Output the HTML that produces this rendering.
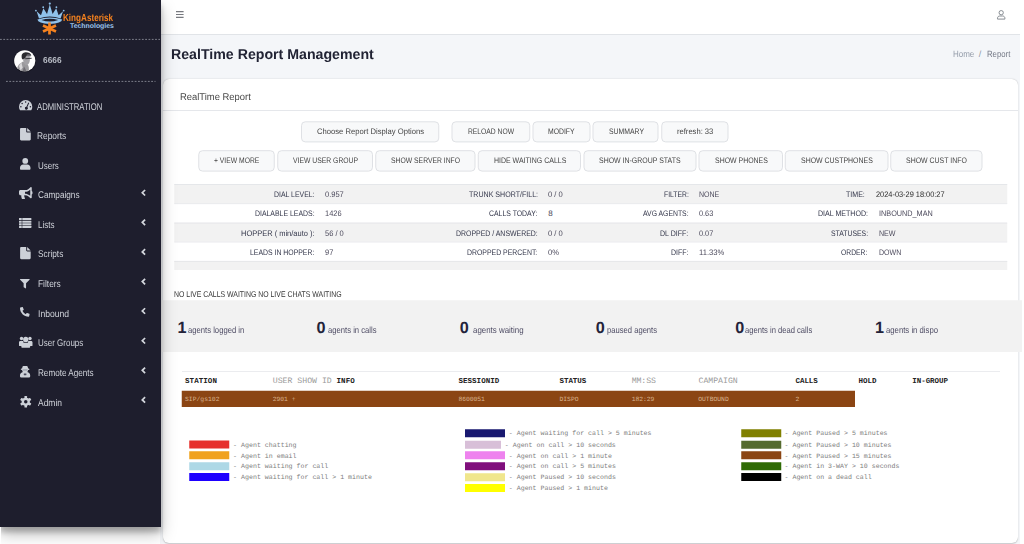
<!DOCTYPE html>
<html lang="en">
<head>
<meta charset="utf-8">
<title>RealTime Report Management</title>
<style>
html,body{margin:0;padding:0;}
body{text-rendering:geometricPrecision;width:1024px;height:544px;overflow:hidden;background:#fff;position:relative;font-family:"Liberation Sans",sans-serif;}
.t{position:absolute;white-space:pre;line-height:1;transform-origin:0 50%;font-family:"Liberation Sans",sans-serif;}
#wrap{position:absolute;left:160px;top:0;width:860px;height:544px;background:#f4f6f9;}
#nav{position:absolute;left:160px;top:0;width:860px;height:34px;background:#fff;border-bottom:1px solid #e1e4e8;box-sizing:content-box;}
#card{position:absolute;left:163px;top:79px;width:855px;height:464px;background:#fff;border-radius:6px;box-shadow:0 0 .6px rgba(0,0,0,.125),0 .5px 1.6px rgba(0,0,0,.2);}
#chead{position:absolute;left:163px;top:110px;width:855px;height:1px;background:#e3e5e8;}
#band{position:absolute;left:161px;top:300.25px;width:861px;height:51.75px;background:#f2f2f2;}
#side{position:absolute;left:0;top:0;width:160px;height:526.5px;background:#1e1e2d;border-right:1px solid rgba(30,30,45,.55);box-shadow:0 7.5px 15px rgba(0,0,0,.25),0 5.3px 5.3px rgba(0,0,0,.22);}
.dash{position:absolute;height:0;border-top:1px dashed #8f939c;}
.btn{position:absolute;box-sizing:border-box;background:#f8f9fa;border:1px solid #dcdfe3;border-radius:3.5px;box-shadow:0 1px 1px rgba(0,0,0,.06);}
.row{position:absolute;left:174.25px;width:833px;box-sizing:border-box;border-top:1px solid #e2e4e7;}
.sw{position:absolute;}
#thl{position:absolute;left:182px;top:371px;width:818px;height:1px;background:#e3e5e8;}
#brow{position:absolute;left:181.75px;top:390.75px;width:673.25px;height:16.25px;background:#8b4513;}
svg{position:absolute;overflow:visible;}
</style>
</head>
<body>
<div id="wrap"></div>
<div style="position:absolute;left:0;top:527px;width:1px;height:17px;background:#fff;z-index:5"></div>
<div id="nav"></div>
<div id="card"></div>
<svg style="left:0;top:0" width="1024" height="544" viewBox="0 0 1024 544">
<rect x="163" y="110" width="855" height=".8" fill="#dfe2e6"/>
<rect x="301.50" y="121.80" width="137.25" height="20.10" rx="3.8" fill="#f8f9fa" stroke="#dfe1e5"/>
<rect x="452.00" y="121.80" width="77.75" height="20.10" rx="3.8" fill="#f8f9fa" stroke="#dfe1e5"/>
<rect x="533.00" y="121.80" width="57.00" height="20.10" rx="3.8" fill="#f8f9fa" stroke="#dfe1e5"/>
<rect x="593.00" y="121.80" width="65.00" height="20.10" rx="3.8" fill="#f8f9fa" stroke="#dfe1e5"/>
<rect x="661.75" y="121.80" width="66.25" height="20.10" rx="3.8" fill="#f8f9fa" stroke="#dfe1e5"/>
<rect x="198.75" y="150.70" width="75.50" height="20.40" rx="3.8" fill="#f8f9fa" stroke="#dfe1e5"/>
<rect x="277.75" y="150.70" width="94.75" height="20.40" rx="3.8" fill="#f8f9fa" stroke="#dfe1e5"/>
<rect x="375.75" y="150.70" width="99.25" height="20.40" rx="3.8" fill="#f8f9fa" stroke="#dfe1e5"/>
<rect x="478.25" y="150.70" width="102.25" height="20.40" rx="3.8" fill="#f8f9fa" stroke="#dfe1e5"/>
<rect x="584.00" y="150.70" width="112.00" height="20.40" rx="3.8" fill="#f8f9fa" stroke="#dfe1e5"/>
<rect x="699.00" y="150.70" width="83.50" height="20.40" rx="3.8" fill="#f8f9fa" stroke="#dfe1e5"/>
<rect x="785.25" y="150.70" width="102.75" height="20.40" rx="3.8" fill="#f8f9fa" stroke="#dfe1e5"/>
<rect x="890.75" y="150.70" width="91.25" height="20.40" rx="3.8" fill="#f8f9fa" stroke="#dfe1e5"/>
<rect x="174.25" y="184.25" width="833" height="19.25" fill="#f2f2f2"/>
<rect x="174.25" y="203.5" width="833" height="19.25" fill="#fff"/>
<rect x="174.25" y="222.75" width="833" height="19.0" fill="#f2f2f2"/>
<rect x="174.25" y="241.75" width="833" height="19.25" fill="#fff"/>
<rect x="174.25" y="261" width="833" height="9" fill="#f2f2f2"/>
<rect x="174.25" y="184.15" width="833" height="0.7" fill="#dfe1e5"/>
<rect x="174.25" y="203.4" width="833" height="0.7" fill="#dfe1e5"/>
<rect x="174.25" y="222.65" width="833" height="0.7" fill="#dfe1e5"/>
<rect x="174.25" y="241.65" width="833" height="0.7" fill="#dfe1e5"/>
<rect x="174.25" y="260.9" width="833" height="0.7" fill="#dfe1e5"/>

<rect x="161" y="300.25" width="861" height="51.75" fill="#f2f2f2"/>
<rect x="182" y="371" width="818" height=".8" fill="#e6e8eb"/>
<rect x="181.75" y="390.75" width="673.25" height="16.25" fill="#8b4513"/>
<rect x="189.25" y="440.50" width="40" height="8" fill="#e6302d"/>
<rect x="189.25" y="451.25" width="40" height="8" fill="#f0a21e"/>
<rect x="189.25" y="462.25" width="40" height="8" fill="#add8e6"/>
<rect x="189.25" y="473.00" width="40" height="8" fill="#1e00ff"/>
<rect x="465.00" y="429.25" width="40" height="8" fill="#191970"/>
<rect x="465.00" y="440.75" width="36" height="8" fill="#d8bfd8"/>
<rect x="465.00" y="451.25" width="40" height="8" fill="#ee82ee"/>
<rect x="465.00" y="462.25" width="40" height="8" fill="#800f7c"/>
<rect x="465.00" y="473.25" width="40" height="8" fill="#f0e68c"/>
<rect x="465.00" y="484.00" width="40" height="8" fill="#ffff00"/>
<rect x="741.25" y="429.25" width="40" height="8" fill="#808000"/>
<rect x="741.25" y="440.75" width="40" height="8" fill="#556b2f"/>
<rect x="741.25" y="451.25" width="40" height="8" fill="#8b4513"/>
<rect x="741.25" y="462.25" width="40" height="8" fill="#2f6b05"/>
<rect x="741.25" y="473.00" width="40" height="8" fill="#000000"/>
</svg>

<!-- navbar icons -->
<svg style="left:175.8px;top:11.25px" width="7.6" height="7" viewBox="0 0 7.6 7"><path d="M0 .6h7.600M0 3.500h7.600M0 6.350h7.600" stroke="#77797f" stroke-width="1.200" fill="none"/></svg>
<svg style="left:997px;top:10px" width="8.4" height="9.6" viewBox="0 0 8.4 9.6"><circle cx="4.2" cy="2.7" r="2.15" fill="none" stroke="#7b8087" stroke-width=".9"/><path d="M.5 9.1V8.2c0-1.3 1-2.2 2.3-2.2h2.8c1.3 0 2.3.9 2.3 2.2v.9z" fill="none" stroke="#7b8087" stroke-width=".9" stroke-linejoin="round"/></svg>

<span class="t" style="left:171.00px;top:48.00px;font-size:14.3px;font-weight:700;transform:scaleX(0.9906);color:#212334">RealTime Report Management</span>
<span class="t" style="left:952.60px;top:50.00px;font-size:9px;transform:scaleX(0.8869);color:#949caa">Home</span>
<span class="t" style="left:978.80px;top:50.00px;font-size:9px;color:#8f96a2">/</span>
<span class="t" style="left:987.20px;top:50.00px;font-size:9px;transform:scaleX(0.8625);color:#747986">Report</span>
<span class="t" style="left:179.50px;top:93.00px;font-size:9.8px;transform:scaleX(0.9608);color:#484848">RealTime Report</span>
<span class="t" style="left:316.75px;top:128.00px;font-size:8px;transform:scaleX(0.9553);color:#444">Choose Report Display Options</span>
<span class="t" style="left:468.00px;top:128.00px;font-size:8px;transform:scaleX(0.8423);color:#444">RELOAD NOW</span>
<span class="t" style="left:548.25px;top:128.00px;font-size:8px;transform:scaleX(0.8534);color:#444">MODIFY</span>
<span class="t" style="left:608.50px;top:128.00px;font-size:8px;transform:scaleX(0.8601);color:#444">SUMMARY</span>
<span class="t" style="left:676.75px;top:128.00px;font-size:8px;transform:scaleX(0.9490);color:#444">refresh: 33</span>
<span class="t" style="left:214.00px;top:157.00px;font-size:8px;transform:scaleX(0.8457);color:#444">+ VIEW MORE</span>
<span class="t" style="left:292.75px;top:157.00px;font-size:8px;transform:scaleX(0.8508);color:#444">VIEW USER GROUP</span>
<span class="t" style="left:391.25px;top:157.00px;font-size:8px;transform:scaleX(0.8503);color:#444">SHOW SERVER INFO</span>
<span class="t" style="left:493.50px;top:157.00px;font-size:8px;transform:scaleX(0.8729);color:#444">HIDE WAITING CALLS</span>
<span class="t" style="left:599.25px;top:157.00px;font-size:8px;transform:scaleX(0.8696);color:#444">SHOW IN-GROUP STATS</span>
<span class="t" style="left:714.50px;top:157.00px;font-size:8px;transform:scaleX(0.8669);color:#444">SHOW PHONES</span>
<span class="t" style="left:801.00px;top:157.00px;font-size:8px;transform:scaleX(0.8685);color:#444">SHOW CUSTPHONES</span>
<span class="t" style="left:906.25px;top:157.00px;font-size:8px;transform:scaleX(0.8676);color:#444">SHOW CUST INFO</span>
<span class="t" style="left:273.50px;top:191.00px;font-size:8px;transform:scaleX(0.8656);color:#33364a">DIAL LEVEL:</span>
<span class="t" style="left:324.75px;top:191.00px;font-size:8px;transform:scaleX(0.9385);color:#4c4a5c">0.957</span>
<span class="t" style="left:254.50px;top:210.00px;font-size:8px;transform:scaleX(0.8640);color:#33364a">DIALABLE LEADS:</span>
<span class="t" style="left:324.75px;top:210.00px;font-size:8px;transform:scaleX(0.9299);color:#4c4a5c">1426</span>
<span class="t" style="left:240.50px;top:230.00px;font-size:8px;transform:scaleX(0.9347);color:#33364a">HOPPER ( min/auto ):</span>
<span class="t" style="left:324.75px;top:230.00px;font-size:8px;transform:scaleX(0.9393);color:#4c4a5c">56 / 0</span>
<span class="t" style="left:249.50px;top:249.00px;font-size:8px;transform:scaleX(0.8609);color:#33364a">LEADS IN HOPPER:</span>
<span class="t" style="left:324.75px;top:249.00px;font-size:8px;transform:scaleX(0.9319);color:#4c4a5c">97</span>
<span class="t" style="left:468.50px;top:191.00px;font-size:8px;transform:scaleX(0.8842);color:#33364a">TRUNK SHORT/FILL:</span>
<span class="t" style="left:548.25px;top:191.00px;font-size:8px;transform:scaleX(0.9501);color:#4c4a5c">0 / 0</span>
<span class="t" style="left:489.25px;top:210.00px;font-size:8px;transform:scaleX(0.8620);color:#33364a">CALLS TODAY:</span>
<span class="t" style="left:548.25px;top:210.00px;font-size:8px;color:#4c4a5c">8</span>
<span class="t" style="left:455.75px;top:230.00px;font-size:8px;transform:scaleX(0.8679);color:#33364a">DROPPED / ANSWERED:</span>
<span class="t" style="left:548.25px;top:230.00px;font-size:8px;transform:scaleX(0.9501);color:#4c4a5c">0 / 0</span>
<span class="t" style="left:467.25px;top:249.00px;font-size:8px;transform:scaleX(0.8641);color:#33364a">DROPPED PERCENT:</span>
<span class="t" style="left:548.25px;top:249.00px;font-size:8px;transform:scaleX(0.9557);color:#4c4a5c">0%</span>
<span class="t" style="left:663.75px;top:191.00px;font-size:8px;transform:scaleX(0.8497);color:#33364a">FILTER:</span>
<span class="t" style="left:699.25px;top:191.00px;font-size:8px;transform:scaleX(0.8778);color:#4c4a5c">NONE</span>
<span class="t" style="left:643.00px;top:210.00px;font-size:8px;transform:scaleX(0.8562);color:#33364a">AVG AGENTS:</span>
<span class="t" style="left:699.25px;top:210.00px;font-size:8px;transform:scaleX(0.9180);color:#4c4a5c">0.63</span>
<span class="t" style="left:660.25px;top:230.00px;font-size:8px;transform:scaleX(0.8801);color:#33364a">DL DIFF:</span>
<span class="t" style="left:699.25px;top:230.00px;font-size:8px;transform:scaleX(0.9180);color:#4c4a5c">0.07</span>
<span class="t" style="left:671.00px;top:249.00px;font-size:8px;transform:scaleX(0.8775);color:#33364a">DIFF:</span>
<span class="t" style="left:699.25px;top:249.00px;font-size:8px;transform:scaleX(0.9530);color:#4c4a5c">11.33%</span>
<span class="t" style="left:845.50px;top:191.00px;font-size:8px;transform:scaleX(0.8808);color:#33364a">TIME:</span>
<span class="t" style="left:875.50px;top:191.00px;font-size:8px;transform:scaleX(0.9226);color:#2b2b2b">2024-03-29 18:00:27</span>
<span class="t" style="left:817.50px;top:210.00px;font-size:8px;transform:scaleX(0.8841);color:#33364a">DIAL METHOD:</span>
<span class="t" style="left:878.75px;top:210.00px;font-size:8px;transform:scaleX(0.9099);color:#4c4a5c">INBOUND_MAN</span>
<span class="t" style="left:830.50px;top:230.00px;font-size:8px;transform:scaleX(0.8563);color:#33364a">STATUSES:</span>
<span class="t" style="left:878.75px;top:230.00px;font-size:8px;transform:scaleX(0.8864);color:#4c4a5c">NEW</span>
<span class="t" style="left:841.25px;top:249.00px;font-size:8px;transform:scaleX(0.8450);color:#33364a">ORDER:</span>
<span class="t" style="left:878.75px;top:249.00px;font-size:8px;transform:scaleX(0.8804);color:#4c4a5c">DOWN</span>
<span class="t" style="left:173.75px;top:290.00px;font-size:8.4px;transform:scaleX(0.8252);color:#333">NO LIVE CALLS WAITING NO LIVE CHATS WAITING</span>
<span class="t" style="left:177.50px;top:320.00px;font-size:16.2px;font-weight:700;color:#23233a">1</span>
<span class="t" style="left:188.00px;top:326.00px;font-size:8.9px;transform:scaleX(0.8643);color:#504e66">agents logged in</span>
<span class="t" style="left:316.50px;top:320.00px;font-size:16.2px;font-weight:700;color:#23233a">0</span>
<span class="t" style="left:327.75px;top:326.00px;font-size:8.9px;transform:scaleX(0.8631);color:#504e66">agents in calls</span>
<span class="t" style="left:459.75px;top:320.00px;font-size:16.2px;font-weight:700;color:#23233a">0</span>
<span class="t" style="left:472.75px;top:326.00px;font-size:8.9px;transform:scaleX(0.8907);color:#504e66">agents waiting</span>
<span class="t" style="left:595.75px;top:320.00px;font-size:16.2px;font-weight:700;color:#23233a">0</span>
<span class="t" style="left:606.75px;top:326.00px;font-size:8.9px;transform:scaleX(0.8595);color:#504e66">paused agents</span>
<span class="t" style="left:735.25px;top:320.00px;font-size:16.2px;font-weight:700;color:#23233a">0</span>
<span class="t" style="left:745.00px;top:326.00px;font-size:8.9px;transform:scaleX(0.8578);color:#504e66">agents in dead calls</span>
<span class="t" style="left:875.00px;top:320.00px;font-size:16.2px;font-weight:700;color:#23233a">1</span>
<span class="t" style="left:886.00px;top:326.00px;font-size:8.9px;transform:scaleX(0.8718);color:#504e66">agents in dispo</span>
<span class="t" style="left:185.00px;top:379.00px;font-size:7.5px;font-family:'Liberation Mono', monospace;font-weight:700;letter-spacing:0.069px;color:#222">STATION</span>
<span class="t" style="left:336.50px;top:379.00px;font-size:7.5px;font-family:'Liberation Mono', monospace;font-weight:700;letter-spacing:0.121px;color:#222">INFO</span>
<span class="t" style="left:458.50px;top:379.00px;font-size:7.5px;font-family:'Liberation Mono', monospace;font-weight:700;letter-spacing:0.026px;color:#222">SESSIONID</span>
<span class="t" style="left:559.50px;top:379.00px;font-size:7.5px;font-family:'Liberation Mono', monospace;font-weight:700;letter-spacing:-0.044px;color:#222">STATUS</span>
<span class="t" style="left:795.50px;top:379.00px;font-size:7.5px;font-family:'Liberation Mono', monospace;font-weight:700;letter-spacing:-0.053px;color:#222">CALLS</span>
<span class="t" style="left:858.50px;top:379.00px;font-size:7.5px;font-family:'Liberation Mono', monospace;font-weight:700;color:#222">HOLD</span>
<span class="t" style="left:912.25px;top:379.00px;font-size:7.5px;font-family:'Liberation Mono', monospace;font-weight:700;letter-spacing:-0.033px;color:#222">IN-GROUP</span>
<span class="t" style="left:272.75px;top:378.00px;font-size:8.2px;font-family:'Liberation Mono', monospace;color:#9a9a9a">USER SHOW ID</span>
<span class="t" style="left:631.75px;top:378.00px;font-size:8.2px;font-family:'Liberation Mono', monospace;letter-spacing:-0.116px;color:#9a9a9a">MM:SS</span>
<span class="t" style="left:698.50px;top:378.00px;font-size:8.2px;font-family:'Liberation Mono', monospace;letter-spacing:-0.008px;color:#9a9a9a">CAMPAIGN</span>
<span class="t" style="left:185.00px;top:397.00px;font-size:6.4px;font-family:'Liberation Mono', monospace;color:#d9b48f">SIP/gs102</span>
<span class="t" style="left:272.75px;top:397.00px;font-size:6.4px;font-family:'Liberation Mono', monospace;letter-spacing:-0.044px;color:#d9b48f">2901 +</span>
<span class="t" style="left:458.50px;top:397.00px;font-size:6.4px;font-family:'Liberation Mono', monospace;letter-spacing:-0.087px;color:#d9b48f">8600051</span>
<span class="t" style="left:559.50px;top:397.00px;font-size:6.4px;font-family:'Liberation Mono', monospace;letter-spacing:-0.037px;color:#d9b48f">DISPO</span>
<span class="t" style="left:631.75px;top:397.00px;font-size:6.4px;font-family:'Liberation Mono', monospace;letter-spacing:-0.086px;color:#d9b48f">182:29</span>
<span class="t" style="left:698.25px;top:397.00px;font-size:6.4px;font-family:'Liberation Mono', monospace;letter-spacing:-0.023px;color:#d9b48f">OUTBOUND</span>
<span class="t" style="left:795.50px;top:397.00px;font-size:6.4px;font-family:'Liberation Mono', monospace;color:#d9b48f">2</span>
<span class="t" style="left:233.10px;top:443.00px;font-size:6.6px;font-family:'Liberation Mono', monospace;letter-spacing:0.008px;color:#7c7c7c">- Agent chatting</span>
<span class="t" style="left:233.10px;top:454.00px;font-size:6.6px;font-family:'Liberation Mono', monospace;letter-spacing:0.008px;color:#7c7c7c">- Agent in email</span>
<span class="t" style="left:233.10px;top:464.00px;font-size:6.6px;font-family:'Liberation Mono', monospace;letter-spacing:0.008px;color:#7c7c7c">- Agent waiting for call</span>
<span class="t" style="left:233.10px;top:475.00px;font-size:6.6px;font-family:'Liberation Mono', monospace;letter-spacing:0.008px;color:#7c7c7c">- Agent waiting for call &gt; 1 minute</span>
<span class="t" style="left:508.80px;top:431.00px;font-size:6.6px;font-family:'Liberation Mono', monospace;letter-spacing:0.008px;color:#7c7c7c">- Agent waiting for call &gt; 5 minutes</span>
<span class="t" style="left:504.80px;top:443.00px;font-size:6.6px;font-family:'Liberation Mono', monospace;letter-spacing:0.008px;color:#7c7c7c">- Agent on call &gt; 10 seconds</span>
<span class="t" style="left:508.80px;top:454.00px;font-size:6.6px;font-family:'Liberation Mono', monospace;letter-spacing:0.008px;color:#7c7c7c">- Agent on call &gt; 1 minute</span>
<span class="t" style="left:508.80px;top:464.00px;font-size:6.6px;font-family:'Liberation Mono', monospace;letter-spacing:0.008px;color:#7c7c7c">- Agent on call &gt; 5 minutes</span>
<span class="t" style="left:508.80px;top:475.00px;font-size:6.6px;font-family:'Liberation Mono', monospace;letter-spacing:0.008px;color:#7c7c7c">- Agent Paused &gt; 10 seconds</span>
<span class="t" style="left:508.80px;top:486.00px;font-size:6.6px;font-family:'Liberation Mono', monospace;letter-spacing:0.007px;color:#7c7c7c">- Agent Paused &gt; 1 minute</span>
<span class="t" style="left:784.50px;top:431.00px;font-size:6.6px;font-family:'Liberation Mono', monospace;letter-spacing:0.008px;color:#7c7c7c">- Agent Paused &gt; 5 minutes</span>
<span class="t" style="left:784.50px;top:443.00px;font-size:6.6px;font-family:'Liberation Mono', monospace;letter-spacing:0.008px;color:#7c7c7c">- Agent Paused &gt; 10 minutes</span>
<span class="t" style="left:784.50px;top:454.00px;font-size:6.6px;font-family:'Liberation Mono', monospace;letter-spacing:0.008px;color:#7c7c7c">- Agent Paused &gt; 15 minutes</span>
<span class="t" style="left:784.50px;top:464.00px;font-size:6.6px;font-family:'Liberation Mono', monospace;letter-spacing:0.008px;color:#7c7c7c">- Agent in 3-WAY &gt; 10 seconds</span>
<span class="t" style="left:784.50px;top:475.00px;font-size:6.6px;font-family:'Liberation Mono', monospace;letter-spacing:0.008px;color:#7c7c7c">- Agent on a dead call</span>

<div id="side">
<!-- logo -->
<svg style="left:33px;top:1px" width="84" height="36" viewBox="33 1 84 36">
  <g fill="#8fc1ea">
    <path d="M36.6 11.2 L41 15.2 L43.4 8.2 L47 14 L49.8 4.6 L52.6 14 L56.2 8.2 L58.6 15.2 L63 11.2 L60.6 18.6 Q49.8 14.6 39 18.6 Z"/>
    <circle cx="49.8" cy="3.6" r="1.1"/><circle cx="43.2" cy="7.2" r=".9"/><circle cx="56.4" cy="7.2" r=".9"/><circle cx="35.9" cy="10.6" r=".9"/><circle cx="63.7" cy="10.6" r=".9"/>
    <path d="M37.4 19.6 Q49.8 15.2 62.2 19.6 Q61.8 23.4 49.8 24 Q37.8 23.4 37.4 19.6 Z M41.4 20 Q49.8 23.2 58.2 20 Q49.8 17.6 41.4 20Z" fill-rule="evenodd"/>
  </g>
  <g stroke="#f5821f" stroke-width="2.7" stroke-linecap="butt">
    <path d="M49.5 22.6V34.4M43 25.6L56 31.4M56 25.6L43 31.4"/>
  </g>
</svg>
<svg style="left:0;top:0" width="160" height="90" viewBox="0 0 160 90"><path d="M0 39.4H160M6 81.4H155.5" stroke="#a3a6b0" stroke-width=".72" stroke-dasharray="1.8 1.5" fill="none"/></svg>

<!-- avatar -->
<svg style="left:14.25px;top:49.5px" width="21.5" height="21.5" viewBox="0 0 21.5 21.5">
  <defs><clipPath id="av"><circle cx="10.75" cy="10.75" r="10.6"/></clipPath>
  <filter id="avb" x="-20%" y="-20%" width="140%" height="140%"><feGaussianBlur stdDeviation=".55"/></filter></defs>
  <circle cx="10.75" cy="11.1" r="11.2" fill="#0d0d14" opacity=".55"/>
  <circle cx="10.75" cy="10.75" r="10.6" fill="#fdfdfd"/>
  <g clip-path="url(#av)"><g filter="url(#avb)">
    <path d="M2.6 21.5 Q3 15.5 6.2 13.4 L9 11.6 L13.6 14.6 Q15.4 17 14.8 22Z" fill="#9b9a9d"/>
    <path d="M5 16 L7.4 12.2 L8.6 17.5 L6.6 20.5Z" fill="#d9d8da"/>
    <path d="M9.2 6 Q12.6 4.4 15.8 6.6 L15.8 10.6 Q15.4 14.2 12.6 15.2 Q9.600 14.200 9.2 10.400Z" fill="#a3a2a6"/>
    <path d="M7.6 7.200 Q7.200 2.600 11.600 2.300 Q16.200 2.200 17.300 5.600 Q15.200 4.900 13.200 5.500 Q11.400 6 11.200 8.200 Q9.600 8.400 8.800 9.600 Q7.800 8.800 7.600 7.200Z" fill="#2a292e"/>
    <path d="M12.800 4.600 Q15.600 3.800 17.300 5.800 L16.200 6.600 Q14.600 5.600 12.600 6Z" fill="#6b6a70"/>
    <path d="M11.200 8.700 L17.600 8.300" stroke="#3a393f" stroke-width="1.100"/>
    <path d="M10 16.500 Q11.400 18.500 12.400 21.500 L8.600 21.500Z" fill="#6f6e74"/>
  </g></g>
</svg>

<!-- menu icons -->
<g>
<!-- tachometer -->
<svg style="left:18.6px;top:99.5px" width="13.3" height="10.4" viewBox="0 0 13.3 10.3"><path d="M6.65 0A6.65 6.65 0 0 0 0 6.65c0 1.2.32 2.33.9 3.3.13.22.37.35.63.35h10.24c.26 0 .5-.13.63-.35.58-.97.9-2.1.9-3.3A6.65 6.65 0 0 0 6.65 0Z" fill="#cdd1d8"/><g fill="#1e1e2d"><circle cx="6.65" cy="1.9" r=".75"/><circle cx="3.1" cy="3.4" r=".75"/><circle cx="1.9" cy="6.7" r=".75"/><circle cx="11.4" cy="6.7" r=".75"/><path d="M9.3 2.5l.9.35-1.8 4.2a1.5 1.5 0 1 1-1.0-.4z"/></g></svg>
<!-- file (Reports) -->
<svg style="left:19.9px;top:128.1px" width="10.8" height="12.4" viewBox="0 0 10.4 12"><path d="M6 0H1.1C.5 0 0 .5 0 1.1v9.8c0 .6.5 1.1 1.1 1.1h8.2c.6 0 1.1-.5 1.1-1.1V4.4H7.1c-.6 0-1.1-.5-1.1-1.1Z M6.9 0v3.1c0 .2.2.4.4.4h3.1Z" fill="#cdd1d8"/></svg>
<!-- user -->
<svg style="left:20px;top:158px" width="10.5" height="11.8" viewBox="0 0 10.5 11.8"><circle cx="5.25" cy="2.9" r="2.9" fill="#cdd1d8"/><path d="M3.2 6.6h4.1c1.8 0 3.2 1.4 3.2 3.2v.9c0 .6-.5 1.1-1.1 1.1H1.1C.5 11.800 0 11.300 0 10.700v-.9c0-1.800 1.400-3.200 3.200-3.200Z" fill="#cdd1d8"/></svg>
<!-- bullhorn -->
<svg style="left:18.6px;top:187.2px" width="13.5" height="12" viewBox="0 0 13.3 11.6"><path d="M13.3 5.1c0-.55-.3-1.03-.74-1.28V.74C12.560.400 12.280 0 11.820 0c-.17 0-.33.06-.46.160L9.4 1.740C8.410 2.520 7.170 2.960 5.910 2.960H1.480C.66 2.960 0 3.620 0 4.430v2.220c0 .82.66 1.480 1.480 1.480h.78c-.03.240-.05.490-.05.740 0 .92.210 1.780.590 2.560.12.240.380.390.650.390h1.720c.6 0 .960-.690.600-1.170-.380-.500-.600-1.120-.600-1.780 0-.260.040-.500.100-.740h.640c1.260 0 2.500.440 3.490 1.220l1.960 1.570c.13.100.29.160.46.160.46 0 .740-.380.740-.740V7.380c.44-.250.740-.730.740-1.280Zm-2.220 3.500-.76-.61C9.070 6.990 7.500 6.440 5.910 6.440V4.650c1.590 0 3.160-.55 4.410-1.550l.76-.61Z" fill="#cdd1d8" fill-rule="evenodd"/></svg>
<!-- list -->
<svg style="left:19.1px;top:218px" width="12.4" height="9.9" viewBox="0 0 12 9.600"><g fill="#cdd1d8"><rect x="0" y="0" width="12" height="2" rx=".3"/><rect x="0" y="2.550" width="12" height="2" rx=".3"/><rect x="0" y="5.100" width="12" height="2" rx=".3"/><rect x="0" y="7.600" width="12" height="2" rx=".3"/></g><path d="M2.900 0v9.600" stroke="#1e1e2d" stroke-width=".55"/></svg>
<!-- file (Scripts) -->
<svg style="left:19.9px;top:247.1px" width="10.8" height="12.2" viewBox="0 0 10.4 12"><path d="M6 0H1.1C.5 0 0 .5 0 1.1v9.8c0 .6.5 1.1 1.1 1.1h8.2c.6 0 1.1-.5 1.1-1.1V4.4H7.1c-.6 0-1.1-.5-1.1-1.1Z M6.9 0v3.1c0 .2.2.4.4.4h3.1Z" fill="#cdd1d8"/></svg>
<!-- filter -->
<svg style="left:20.1px;top:278.9px" width="9.7" height="9.5" viewBox="0 0 9.600 9.400"><path d="M.5 0h8.600c.45 0 .67.540.35.850L6 4.300v4.500c0 .4-.46.640-.790.410l-1.400-.980A.500.500 0 0 1 3.600 7.820V4.300L.15.850C-.17.540.050 0 .5 0Z" fill="#cdd1d8"/></svg>
<!-- phone -->
<svg style="left:20.2px;top:306.9px" width="9.6" height="9.7" viewBox="0 0 512 512"><path d="M493.400 24.600l-104-24c-11.300-2.600-22.900 3.300-27.500 13.900l-48 112c-4.200 9.800-1.400 21.300 6.900 28l60.600 49.600c-36 76.700-98.900 140.500-177.200 177.200l-49.600-60.600c-6.800-8.300-18.200-11.100-28-6.900l-112 48C3.900 366.500-2 378.100.6 389.400l24 104C27.100 504.200 36.700 512 48 512c256.100 0 464-207.500 464-464 0-11.200-7.700-20.900-18.600-23.400z" fill="#cdd1d8" transform="matrix(-1 0 0 1 512 0)"/></svg>
<!-- users -->
<svg style="left:18.6px;top:335.7px" width="13.5" height="12" viewBox="0 0 13.300 11.300"><g fill="#cdd1d8"><circle cx="2.500" cy="2.300" r="1.700"/><circle cx="10.800" cy="2.300" r="1.700"/><circle cx="6.650" cy="3.100" r="2.600"/><path d="M1.300 4.600h2.100c.400 0 .700.100 1 .300-.200.600 0 1.600.700 2.400-1.100.400-2 1.300-2.300 2.400H.700c-.400 0-.700-.300-.700-.700V5.900C0 5.200.600 4.600 1.300 4.600Z"/><path d="M12 4.600H9.900c-.400 0-.700.100-1 .300.200.600 0 1.600-.700 2.400 1.100.400 2 1.300 2.300 2.400h2.100c.400 0 .700-.300.700-.700V5.900c0-.700-.600-1.300-1.300-1.300Z"/><path d="M5 6.400h3.300c1.500 0 2.700 1.200 2.700 2.700v1.200c0 .550-.450 1-1 1H3.300c-.550 0-1-.450-1-1V9.100c0-1.500 1.200-2.700 2.700-2.700Z"/></g></svg>
<!-- user-secret-ish (Remote Agents) -->
<svg style="left:19.9px;top:366.3px" width="10.2" height="11.4" viewBox="0 0 10 11.2"><path d="M3.300 0h3.400c.400 0 .750.250.850.650L8 2.400c.800.100 1.300.400 1.300.750 0 .350-.500.650-1.300.800-.100.800-.400 1.500-.900 2.050C8.800 6.400 10 7.600 10 9.200v1.200c0 .450-.350.800-.800.800H.800c-.450 0-.800-.350-.800-.800V9.200C0 7.600 1.200 6.400 2.900 6 2.400 5.450 2.100 4.750 2 3.950 1.200 3.800.700 3.500.700 3.150c0-.350.500-.650 1.300-.750L2.450.650C2.550.250 2.900 0 3.300 0Z" fill="#cdd1d8"/><rect x="3.700" y="7.300" width="2.600" height="1.700" rx=".3" fill="#4a4b5c"/><path d="M2.600 3.900h4.800" stroke="#6a6c7c" stroke-width=".6"/></svg>
<!-- cog -->
<svg style="left:19.500px;top:395.750px" width="11.500" height="11.500" viewBox="-5.750 -5.750 11.500 11.500"><g fill="#cdd1d8"><circle r="4.100"/><rect x="-1.300" y="-5.750" width="2.600" height="11.500" rx=".5"/><rect x="-1.300" y="-5.750" width="2.600" height="11.500" rx=".5" transform="rotate(60)"/><rect x="-1.300" y="-5.750" width="2.600" height="11.500" rx=".5" transform="rotate(120)"/></g><circle r="1.750" fill="#1e1e2d"/></svg>
</g>

<!-- chevrons -->
<svg style="left:140.750px;top:0" width="5" height="420" viewBox="0 0 5 420"><g fill="none" stroke="#d4d7dd" stroke-width="1.75" stroke-linejoin="miter">
<path d="M4.1 190.00L1.3 192.75l2.8 2.75"/>
<path d="M4.1 219.60L1.3 222.35l2.8 2.75"/>
<path d="M4.1 249.20L1.3 251.95l2.8 2.75"/>
<path d="M4.1 278.80L1.3 281.55l2.8 2.75"/>
<path d="M4.1 308.25L1.3 311.00l2.8 2.75"/>
<path d="M4.1 338.00L1.3 340.75l2.8 2.75"/>
<path d="M4.1 367.60L1.3 370.35l2.8 2.75"/>
<path d="M4.1 397.20L1.3 399.95l2.8 2.75"/>
</g></svg>

<span class="t" style="left:37.00px;top:103.00px;font-size:9.8px;transform:scaleX(0.7859);color:#d0d3da">ADMINISTRATION</span>
<span class="t" style="left:37.30px;top:132.00px;font-size:9.8px;transform:scaleX(0.8510);color:#d0d3da">Reports</span>
<span class="t" style="left:37.50px;top:162.00px;font-size:9.8px;transform:scaleX(0.8127);color:#d0d3da">Users</span>
<span class="t" style="left:37.50px;top:191.00px;font-size:9.8px;transform:scaleX(0.8383);color:#d0d3da">Campaigns</span>
<span class="t" style="left:37.50px;top:221.00px;font-size:9.8px;transform:scaleX(0.8211);color:#d0d3da">Lists</span>
<span class="t" style="left:37.50px;top:250.00px;font-size:9.8px;transform:scaleX(0.8447);color:#d0d3da">Scripts</span>
<span class="t" style="left:37.50px;top:280.00px;font-size:9.8px;transform:scaleX(0.8548);color:#d0d3da">Filters</span>
<span class="t" style="left:37.50px;top:310.00px;font-size:9.8px;transform:scaleX(0.8766);color:#d0d3da">Inbound</span>
<span class="t" style="left:37.50px;top:339.00px;font-size:9.8px;transform:scaleX(0.8155);color:#d0d3da">User Groups</span>
<span class="t" style="left:37.50px;top:369.00px;font-size:9.8px;transform:scaleX(0.8291);color:#d0d3da">Remote Agents</span>
<span class="t" style="left:37.50px;top:399.00px;font-size:9.8px;transform:scaleX(0.8657);color:#d0d3da">Admin</span>
<span class="t" style="left:42.50px;top:56.00px;font-size:8.6px;font-weight:700;transform:scaleX(0.9699);color:#b9bdc6">6666</span>
<span class="t" style="left:63.20px;top:14.00px;font-size:10.2px;font-weight:700;transform:scaleX(0.7972);color:#f5821f">KingAsterisk</span>
<span class="t" style="left:70.00px;top:24.00px;font-size:6.9px;font-weight:700;color:#9cc3ec">Technologies</span>
</div>
</body>
</html>
